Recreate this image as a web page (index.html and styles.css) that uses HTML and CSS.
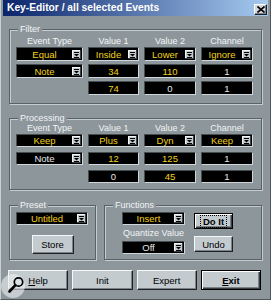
FILE: index.html
```html
<!DOCTYPE html>
<html lang="en">
<head>
  <meta charset="UTF-8">
  <title>Key-Editor</title>
  <link rel="stylesheet" href="styles.css">
</head>
<body>
  <svg class="defs" aria-hidden="true">
    <symbol id="dd" viewBox="0 0 9 9">
      <rect width="9" height="9" fill="#3a4044"/>
      <rect width="8" height="8" fill="#f2f6f6"/>
      <rect x="1" y="1" width="7" height="7" fill="#c3cbcf"/>
      <rect x="2" y="2" width="5" height="1" fill="#000"/>
      <polygon points="2,4 7,4 4.5,6.5" fill="#000"/>
      <rect x="2" y="7" width="5" height="1" fill="#000"/>
    </symbol>
  </svg>

  <div class="window">
    <div class="titlebar">
      <span class="title">Key-Editor / all selected Events</span>
      <span class="close">
        <svg width="8" height="7" viewBox="0 0 8 7"><path d="M0.5 0.5 L7.5 6.5 M7.5 0.5 L0.5 6.5" stroke="#000" stroke-width="1.6"/></svg>
      </span>
    </div>

    <div class="content">
      <fieldset class="group filter">
        <legend>Filter</legend>
        <div class="cols heads">
          <span>Event Type</span><span>Value 1</span><span>Value 2</span><span>Channel</span>
        </div>
        <div class="cols rows">
          <div class="field drop"><span>Equal</span><svg class="arrow"><use href="#dd"/></svg></div>
          <div class="field drop"><span>Inside</span><svg class="arrow"><use href="#dd"/></svg></div>
          <div class="field drop"><span>Lower</span><svg class="arrow"><use href="#dd"/></svg></div>
          <div class="field drop"><span>Ignore</span><svg class="arrow"><use href="#dd"/></svg></div>

          <div class="field drop"><span>Note</span><svg class="arrow"><use href="#dd"/></svg></div>
          <div class="field"><span>34</span></div>
          <div class="field"><span>110</span></div>
          <div class="field white"><span>1</span></div>

          <div class="blank"></div>
          <div class="field"><span>74</span></div>
          <div class="field white"><span>0</span></div>
          <div class="field white"><span>1</span></div>
        </div>
      </fieldset>

      <fieldset class="group proc">
        <legend>Processing</legend>
        <div class="cols heads">
          <span>Event Type</span><span>Value 1</span><span>Value 2</span><span>Channel</span>
        </div>
        <div class="cols rows">
          <div class="field drop"><span>Keep</span><svg class="arrow"><use href="#dd"/></svg></div>
          <div class="field drop"><span>Plus</span><svg class="arrow"><use href="#dd"/></svg></div>
          <div class="field drop"><span>Dyn</span><svg class="arrow"><use href="#dd"/></svg></div>
          <div class="field drop"><span>Keep</span><svg class="arrow"><use href="#dd"/></svg></div>

          <div class="field drop white"><span>Note</span><svg class="arrow"><use href="#dd"/></svg></div>
          <div class="field"><span>12</span></div>
          <div class="field"><span>125</span></div>
          <div class="field white"><span>1</span></div>

          <div class="blank"></div>
          <div class="field white"><span>0</span></div>
          <div class="field"><span>45</span></div>
          <div class="field white"><span>1</span></div>
        </div>
      </fieldset>

      <div class="lower">
        <fieldset class="group preset">
          <legend>Preset</legend>
          <div class="field drop"><span>Untitled</span><svg class="arrow"><use href="#dd"/></svg></div>
          <button class="btn store">Store</button>
        </fieldset>

        <fieldset class="group functions">
          <legend>Functions</legend>
          <div class="func-body">
            <div class="func-col">
              <div class="field drop"><span>Insert</span><svg class="arrow"><use href="#dd"/></svg></div>
              <div class="label">Quantize Value</div>
              <div class="field drop white"><span>Off</span><svg class="arrow"><use href="#dd"/></svg></div>
            </div>
            <div class="func-btns">
              <button class="btn default"><span class="focus">Do It</span></button>
              <button class="btn undo">Undo</button>
            </div>
          </div>
        </fieldset>
      </div>

      <div class="buttons">
        <button class="btn"><u>H</u>elp</button>
        <button class="btn">Init</button>
        <button class="btn">Expert</button>
        <button class="btn default"><u>E</u>xit</button>
      </div>
    </div>

    <div class="zoom-badge">
      <svg width="24" height="24" viewBox="0 0 24 24">
        <circle cx="17.5" cy="8" r="4.2" fill="none" stroke="#000" stroke-width="1.7"/>
        <path d="M14.4 11.2 L8.5 17.5" stroke="#000" stroke-width="2.6" stroke-linecap="round"/>
      </svg>
    </div>
  </div>
</body>
</html>
```

FILE: styles.css
```css
* {
  box-sizing: border-box;
}
html, body {
  margin: 0;
}
body {
  width: 271px;
  height: 300px;
  overflow: hidden;
  background: #8d969b;
  font-family: "Liberation Sans", Arial, sans-serif;
  font-size: 9px;
  color: #f2f5f5;
}
.defs {
  position: absolute;
  width: 0;
  height: 0;
}
.window {
  position: relative;
  height: 300px;
  padding: 0 2px;
  border-left: 1px solid #c7cfd3;
  border-right: 1px solid #4e575b;
  border-bottom: 1px solid #4e575b;
}

/* title bar */
.titlebar {
  height: 16px;
  display: flex;
  justify-content: space-between;
  padding: 0 1px 0 4px;
  background: linear-gradient(90deg, #0a246a 0%, #a6caf0 100%);
}
.title {
  color: #fff;
  font-weight: 700;
  font-size: 10.25px;
  line-height: 16px;
}
.close {
  width: 13px;
  height: 11px;
  margin-top: 4px;
  display: flex;
  align-items: center;
  justify-content: center;
  background: #d4d8dc;
  border: 1px solid;
  border-color: #fff #1c1f21 #1c1f21 #fff;
  box-shadow: inset -1px -1px 0 #808488;
}

.content {
  padding: 8px 6px 0;
}

/* group boxes */
.group {
  margin: 0;
  min-width: 0;
  padding: 2px 6px 8px;
  border: 1px solid #596266;
  box-shadow: inset 1px 1px 0 #c4ccd0, 1px 1px 0 #c4ccd0;
}
.group legend {
  margin-left: 2px;
  padding: 0 2px;
  font-size: 9px;
  line-height: 10px;
  background: #8d969b;
}
.proc {
  margin-top: 9px;
  padding-top: 0;
  padding-bottom: 6px;
}

.cols {
  display: grid;
  grid-template-columns: 67px 51px 52px 52px;
  column-gap: 5px;
}
.heads {
  height: 11px;
  line-height: 11px;
  text-align: center;
}
.rows {
  grid-auto-rows: 14px;
  row-gap: 3px;
}
.proc .rows {
  grid-auto-rows: 13px;
  row-gap: 5px;
}

/* black value fields */
.field {
  display: flex;
  align-items: center;
  background: #000;
  border: 1px solid;
  border-color: #454d51 #cfd7da #cfd7da #454d51;
  font-size: 9.5px;
  color: #f2d21c;
  white-space: nowrap;
}
.field span {
  flex: 1;
  text-align: center;
}
.field.white {
  color: #e4e8e9;
}
.arrow {
  flex: none;
  width: 9px;
  height: 9px;
  margin-right: 1px;
}

/* lower groups */
.lower {
  display: flex;
  gap: 8px;
  margin-top: 10px;
}
.preset {
  width: 87px;
  padding-bottom: 5px;
}
.preset .field {
  height: 13px;
  margin-right: 1px;
}
.functions {
  width: 158px;
  padding-bottom: 5px;
}
.func-body {
  display: flex;
  gap: 9px;
  padding-left: 11px;
}
.func-col {
  width: 63px;
}
.func-col .field {
  height: 13px;
}
.label {
  margin: 3px 0;
  line-height: 10px;
  text-align: center;
  white-space: nowrap;
}
.func-btns {
  width: 39px;
  display: flex;
  flex-direction: column;
  gap: 7px;
  padding-top: 1px;
}

/* buttons */
.btn {
  display: block;
  padding: 0;
  font-family: "Liberation Sans", Arial, sans-serif;
  font-size: 9.5px;
  color: #000;
  background: #c3cbcf;
  border: 1px solid;
  border-color: #f4f8f8 #1e2224 #1e2224 #f4f8f8;
  box-shadow: inset -1px -1px 0 #7a8286;
}
.btn.default {
  font-weight: 700;
  border-color: #000;
  box-shadow: inset 1px 1px 0 #fff, inset -1px -1px 0 #3a3f42, inset -2px -2px 0 #7a8286;
}
.store {
  width: 42px;
  height: 19px;
  margin: 10px auto 0;
}
.func-btns .btn {
  height: 16px;
}
.focus {
  outline: 1px dotted #000;
  padding: 0 2px;
}
.buttons {
  display: grid;
  grid-template-columns: repeat(4, 1fr);
  gap: 4px;
  margin: 10px 1px 0 -1px;
}
.buttons .btn {
  height: 20px;
}

.zoom-badge {
  position: absolute;
  left: 0;
  top: 274px;
  width: 24px;
  height: 24px;
  border-radius: 50%;
  background: rgba(236, 240, 242, 0.6);
}
```
